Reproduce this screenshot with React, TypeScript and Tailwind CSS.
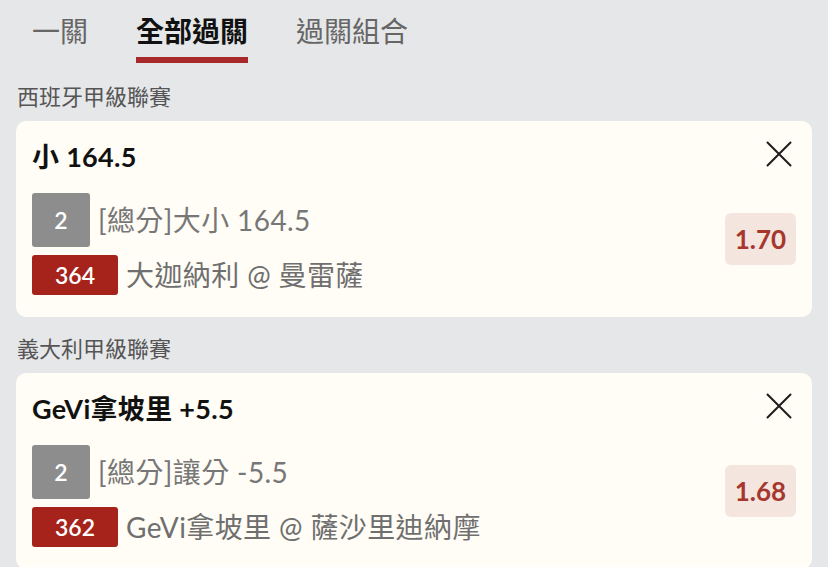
const FONT = "font-['Lato','Noto_Sans_CJK_TC',sans-serif]";

type Bet = {
  league: string;
  title: string;
  legs: string;
  market: string;
  code: string;
  match: string;
  odds: string;
};

const bets: Bet[] = [
  {
    league: "西班牙甲級聯賽",
    title: "小 164.5",
    legs: "2",
    market: "[總分]大小 164.5",
    code: "364",
    match: "大迦納利 @ 曼雷薩",
    odds: "1.70",
  },
  {
    league: "義大利甲級聯賽",
    title: "GeVi拿坡里 +5.5",
    legs: "2",
    market: "[總分]讓分 -5.5",
    code: "362",
    match: "GeVi拿坡里 @ 薩沙里迪納摩",
    odds: "1.68",
  },
];

const CloseIcon = () => (
  <svg width="26" height="26" viewBox="0 0 26 26" fill="none">
    <path d="M1.5 1.5 L24.5 24.5 M24.5 1.5 L1.5 24.5" stroke="#1c1c1c" strokeWidth="2" strokeLinecap="round" />
  </svg>
);

const BetCard = ({ bet }: { bet: Bet }) => (
  <div className="mx-4 rounded-[10px] bg-[#fffdf6] pl-4 pr-4 pt-[20px] pb-[22px]">
    {/* title + remove */}
    <div className="flex items-center justify-between">
      <div className="text-[27px] leading-[32px] font-bold tracking-[0.3px] text-[#111]">{bet.title}</div>
      <div className="mr-[4px] -mt-[6px]">
        <CloseIcon />
      </div>
    </div>

    <div className="mt-[20px] flex items-center justify-between">
      <div className="flex flex-col gap-2">
        <div className="flex items-center gap-[8px]">
          <div className="flex h-[54px] w-[58px] items-center justify-center rounded-[3px] bg-[#8d8d8d] text-[23px] font-semibold text-white">
            {bet.legs}
          </div>
          <div className="text-[28px] leading-[34px] tracking-[0.4px] text-[#777]">{bet.market}</div>
        </div>
        <div className="flex items-center gap-[8px]">
          <div className="flex h-[40px] w-[86px] items-center justify-center rounded-[3px] bg-[#a6231c] text-[23px] font-semibold text-white">
            {bet.code}
          </div>
          <div className="text-[28px] leading-[34px] tracking-[0.4px] text-[#6f6f6f]">{bet.match}</div>
        </div>
      </div>
      <div className="mb-[10px] flex h-[52px] w-[71px] items-center justify-center rounded-[6px] bg-[#f4e5df] text-[26px] font-bold text-[#a5372d]">
        {bet.odds}
      </div>
    </div>
  </div>
);

export default function App() {
  return (
    <div className={`${FONT} h-[567px] w-[828px] overflow-hidden bg-[#e6e7e9]`}>
      {/* tabs */}
      <div className="flex gap-[48px] px-[32px] pt-[13px]">
        <div className="flex flex-col">
          <div className="text-[28px] leading-[36px] text-[#666]">一關</div>
        </div>
        <div className="flex flex-col">
          <div className="text-[28px] leading-[36px] font-bold text-[#111]">全部過關</div>
          <div className="mt-[8px] h-[6px] bg-[#a8292a]" />
        </div>
        <div className="flex flex-col">
          <div className="text-[28px] leading-[36px] text-[#666]">過關組合</div>
        </div>
      </div>

      {bets.map((bet, i) => (
        <div key={bet.code}>
          <div className={`${i === 0 ? "mt-[19px]" : "mt-[17px]"} mb-[9px] px-[17px] text-[22px] leading-[30px] text-[#555]`}>
            {bet.league}
          </div>
          <BetCard bet={bet} />
        </div>
      ))}
    </div>
  );
}
